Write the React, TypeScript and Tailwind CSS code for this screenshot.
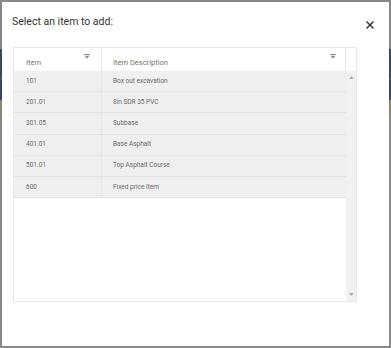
const items = [
  ["101", "Box out excavation"],
  ["201.01", "8in SDR 35 PVC"],
  ["301.05", "Subbase"],
  ["401.01", "Base Asphalt"],
  ["501.01", "Top Asphalt Course"],
  ["600", "Fixed price Item"],
];

function FilterIcon() {
  return (
    <svg width="6" height="5" viewBox="0 0 6 5" className="shrink-0">
      <rect x="0" y="0" width="6" height="1" fill="#8f8f8f" />
      <polygon points="0.5,1.8 5.5,1.8 3,4.8" fill="#8f8f8f" />
    </svg>
  );
}

function Arrow({ up }: { up?: boolean }) {
  return (
    <svg width="5" height="3" viewBox="0 0 5 3">
      <polygon points={up ? "0,3 5,3 2.5,0" : "0,0 5,0 2.5,3"} fill="#b0b0b0" />
    </svg>
  );
}

export default function App() {
  return (
    <div className="relative w-[391px] h-[348px] overflow-hidden bg-[#888888] font-['Roboto',sans-serif]">
      {/* dimmed page behind the modal */}
      <div className="h-[49px] bg-[#878787]" />
      <div className="h-[29px] bg-[#3e4756]" />
      <div className="h-px bg-[#5b6470]" />
      <div className="h-[21px] bg-[#3a4557]" />
      <div className="h-[15px] bg-[#8d876a]" />

      <div className="absolute left-[2px] top-[2px] w-[387px] h-[344px] bg-white">
        <div className="flex items-start justify-between pl-[10px] pr-[15px] pt-[13px]">
          <h2 className="text-[10.5px] leading-[14px] text-[#333333]">Select an item to add:</h2>
          <button className="mt-[6px]">
            <svg width="8" height="8" viewBox="0 0 8 8">
              <path d="M0.5 0.5 L7.5 7.5 M7.5 0.5 L0.5 7.5" stroke="#2b2b2b" strokeWidth="1.4" />
            </svg>
          </button>
        </div>

        <div className="ml-[11px] mt-[18px] w-[344px] h-[255px] border border-[#e8e8e8] flex flex-col">
          <div className="flex h-[23px] bg-white text-[7.5px] text-[#7b7068]">
            <div className="w-[88px] flex justify-between border-r border-[#e6e6e6] pl-[12px] pr-[11px]">
              <span className="mt-[10px] leading-[10px]">Item</span>
              <span className="mt-[6px]"><FilterIcon /></span>
            </div>
            <div className="w-[244px] flex justify-between border-r border-[#e6e6e6] pl-[11px] pr-[9px]">
              <span className="mt-[10px] leading-[10px]">Item Description</span>
              <span className="mt-[6px]"><FilterIcon /></span>
            </div>
            <div className="flex-1" />
          </div>

          <div className="flex flex-1">
            <div className="w-[332px] flex flex-col bg-white">
              {items.map(([code, desc]) => (
                <div key={code} className="flex h-[21.2px] bg-[#efefef] border-b border-[#e3e3e3] text-[6.5px] text-[#6a6a6a]">
                  <div className="w-[88px] flex items-center pl-[12px] pt-px border-r border-[#e6e6e6]">{code}</div>
                  <div className="flex-1 flex items-center pl-[11px] pt-px">{desc}</div>
                </div>
              ))}
            </div>
            <div className="flex-1 bg-[#f1f1f1] flex flex-col items-center justify-between pt-[5px] pb-[5px]">
              <Arrow up />
              <Arrow />
            </div>
          </div>
        </div>
      </div>
    </div>
  );
}
